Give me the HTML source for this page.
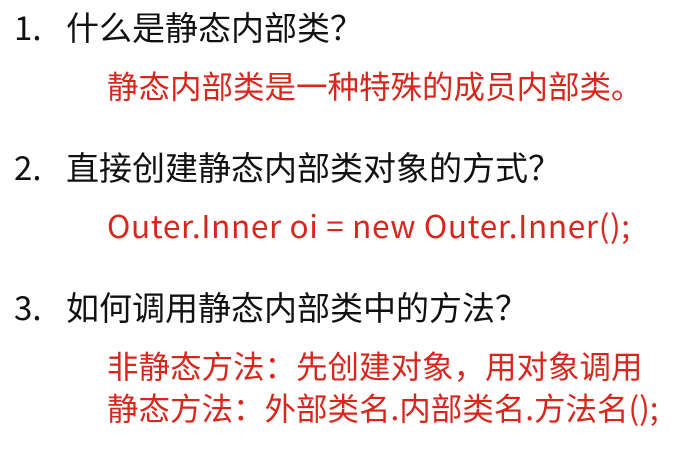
<!DOCTYPE html>
<html><head><meta charset="utf-8"><style>
body{margin:0;width:687px;height:455px;background:#fff;overflow:hidden;position:relative;font-family:"Noto Sans CJK SC","Liberation Sans",sans-serif;}
.q{position:absolute;font-size:33px;line-height:33px;color:#111;white-space:nowrap}
.q span{position:absolute;left:52px}
.a{position:absolute;left:107px;font-size:31.5px;line-height:31px;color:#d9261c;white-space:nowrap}
</style></head><body>
<div class="q" style="left:14px;top:10px">1.<span>什么是静态内部类？</span></div>
<div class="a" style="top:70px">静态内部类是一种特殊的成员内部类。</div>
<div class="q" style="left:14px;top:150px">2.<span>直接创建静态内部类对象的方式？</span></div>
<div class="a" style="top:210px;letter-spacing:0.65px">Outer.Inner oi = new Outer.Inner();</div>
<div class="q" style="left:14px;top:290px">3.<span>如何调用静态内部类中的方法？</span></div>
<div class="a" style="top:350px">非静态方法：先创建对象，用对象调用</div>
<div class="a" style="top:392px">静态方法：外部类名.内部类名.方法名();</div>
</body></html>
